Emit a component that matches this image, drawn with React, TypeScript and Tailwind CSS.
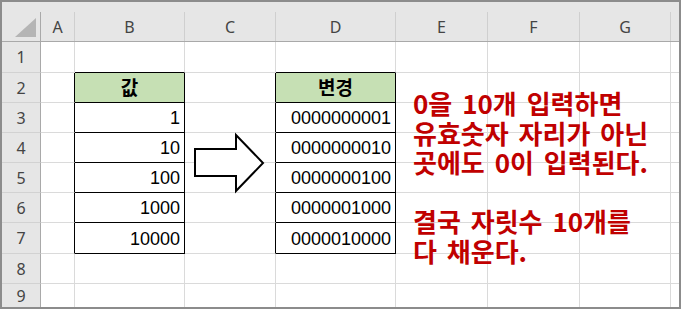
import React from "react";

const COLS = ["", "A", "B", "C", "D", "E", "F", "G", ""];
const B_VALS: Record<number, string> = { 3: "1", 4: "10", 5: "100", 6: "1000", 7: "10000" };
const D_VALS: Record<number, string> = {
  3: "0000000001",
  4: "0000000010",
  5: "0000000100",
  6: "0000001000",
  7: "0000010000",
};

const inTable = (r: number, c: number) => r >= 2 && r <= 7 && (c === 2 || c === 4);

function HeaderRow() {
  return (
    <>
      {COLS.map((l, c) => (
        <div key={c} className="flex flex-col bg-[#e6e6e6] border-b border-b-[#a9a9a9]">
          <div className="h-[10px]" />
          <div
            className={
              "flex-1 flex items-center justify-center text-[16px] text-[#444] " +
              (c === 8 ? "" : c === 0 ? "border-r border-r-[#a9a9a9]" : "border-r border-r-[#cfcfcf]")
            }
            style={{ fontFamily: '"Noto Sans", "Liberation Sans", sans-serif' }}
          >
            {c === 0 ? (
              <svg width="38" height="29" viewBox="0 0 38 29">
                <polygon points="13,25 34,6 34,25" fill="#b5b5b5" />
              </svg>
            ) : (
              l
            )}
          </div>
        </div>
      ))}
    </>
  );
}

function DataRow({ r }: { r: number }) {
  const last = r === 9;
  return (
    <>
      {COLS.map((_, c) => {
        if (c === 0) {
          return (
            <div
              key={c}
              className={
                "flex items-center justify-center bg-[#e6e6e6] text-[16px] text-[#444] border-r border-r-[#a9a9a9] " +
                (last ? "" : "border-b border-b-[#d2d2d2]")
              }
              style={{ fontFamily: '"Noto Sans", "Liberation Sans", sans-serif' }}
            >
              {r}
            </div>
          );
        }
        const blackR = inTable(r, c) || inTable(r, c + 1);
        const blackB = inTable(r, c) || inTable(r + 1, c);
        const rCls = c === 8 ? "" : blackR ? "border-r border-r-black" : "border-r border-r-[#dadada]";
        const bCls = last ? "" : blackB ? "border-b border-b-black" : "border-b border-b-[#dadada]";
        const green = r === 2 && (c === 2 || c === 4);
        let content: React.ReactNode = null;
        let kind: "num" | "head" | null = null;
        if (r === 2 && c === 2) {
          content = "값";
          kind = "head";
        } else if (r === 2 && c === 4) {
          content = "변경";
          kind = "head";
        } else if (c === 2 && B_VALS[r]) {
          content = B_VALS[r];
          kind = "num";
        } else if (c === 4 && D_VALS[r]) {
          content = D_VALS[r];
          kind = "num";
        }
        return (
          <div
            key={c}
            className={
              "flex " +
              rCls +
              " " +
              bCls +
              " " +
              (green ? "bg-[#c6e0b4] " : "bg-white ") +
              (kind === "head"
                ? "items-center justify-center font-bold text-[19px] text-black"
                : "items-center justify-end pr-[4px] pt-[2px] text-[18px] text-black")
            }
            style={{
              fontFamily:
                kind === "head"
                  ? '"Noto Sans CJK KR", sans-serif'
                  : '"Liberation Sans", "Noto Sans CJK KR", sans-serif',
            }}
          >
            {content}
          </div>
        );
      })}
    </>
  );
}

export default function App() {
  return (
    <div className="relative w-[681px] h-[309px] border-2 border-[#8c8c8c] bg-white overflow-hidden">
      <div className="grid grid-cols-[39px_34px_110px_91px_120px_92px_92px_91px_8px] grid-rows-[40px_31px_30px_30px_30px_30px_30px_31px_30px_23px]">
        <HeaderRow />
        {[1, 2, 3, 4, 5, 6, 7, 8, 9].map((r) => (
          <DataRow key={r} r={r} />
        ))}
      </div>
      <svg className="absolute left-0 top-0" width="677" height="305" viewBox="2 2 677 305">
        <polygon
          points="195,149 236,149 236,135 263,163 236,191 236,176 195,176"
          fill="white"
          stroke="black"
          strokeWidth="2"
          strokeLinejoin="miter"
        />
      </svg>
      <div
        className="absolute left-[411px] top-[86px] text-[26px] font-bold leading-[29.6px] text-[#c00000] whitespace-pre [word-spacing:4px]"
        style={{ fontFamily: '"Noto Sans CJK KR", sans-serif' }}
      >
        <div>0을 10개 입력하면</div>
        <div>유효숫자 자리가 아닌</div>
        <div>곳에도 0이 입력된다.</div>
        <div>&nbsp;</div>
        <div>결국 자릿수 10개를</div>
        <div>다 채운다.</div>
      </div>
    </div>
  );
}
